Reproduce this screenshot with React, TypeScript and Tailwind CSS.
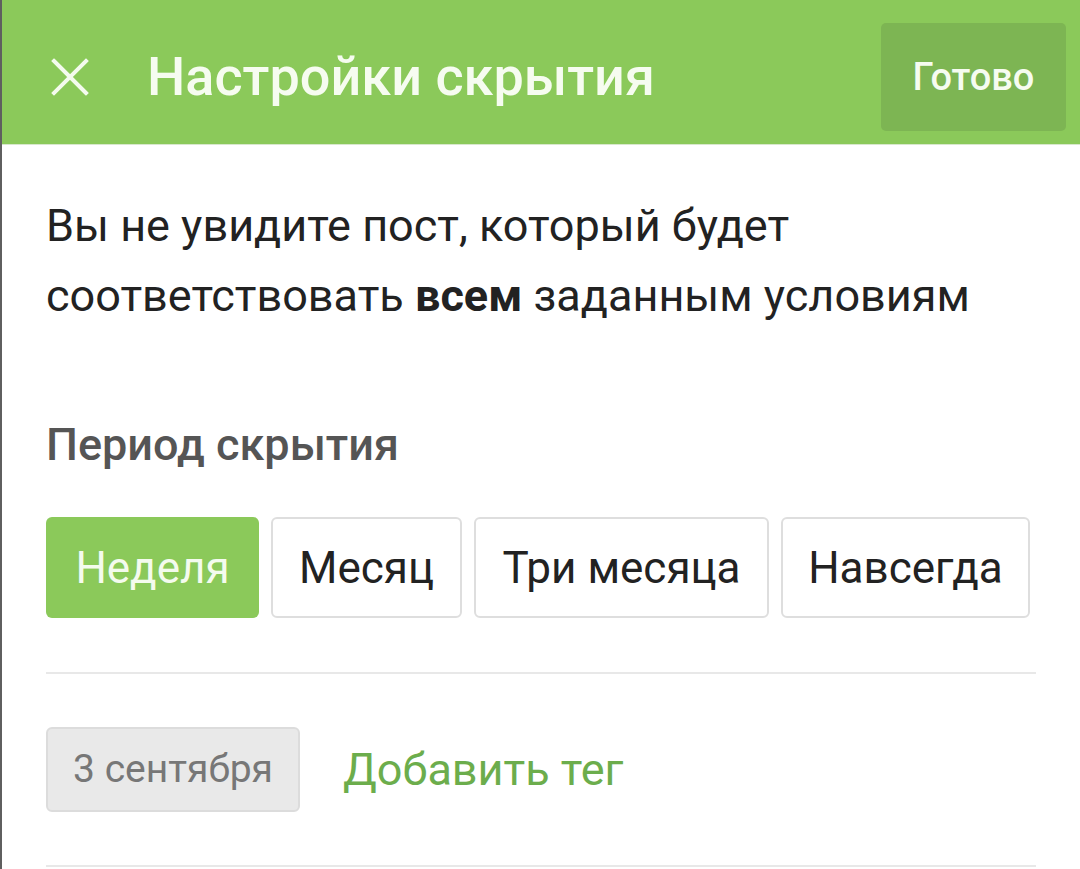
import React from "react";

const periods = [
  { label: "Неделя", width: "w-[213px]", active: true },
  { label: "Месяц", width: "w-[191px]", active: false },
  { label: "Три месяца", width: "w-[295px]", active: false },
  { label: "Навсегда", width: "w-[249px]", active: false },
];

export default function App() {
  return (
    <div
      className="flex h-[869px] w-[1080px] flex-col overflow-hidden border-l-2 border-[#5f5f5f] bg-white"
      style={{ fontFamily: "Roboto, 'Noto Sans', sans-serif" }}
    >
      <header className="flex h-[145px] shrink-0 items-center border-b border-[#d8e8cc] bg-[#8bc95a] pt-[10px] pr-[14px]">
        <button className="ml-[48px] flex h-[40px] w-[40px] items-center justify-center text-[#f4fbee]">
          <svg width="38" height="38" viewBox="0 0 38 38" fill="none">
            <path
              d="M3 3 L35 35 M35 3 L3 35"
              stroke="currentColor"
              strokeWidth="4"
              strokeLinecap="square"
            />
          </svg>
        </button>
        <h1 className="ml-[57px] flex-1 text-[54px] font-medium leading-none text-[#f6fcf0]">
          Настройки скрытия
        </h1>
        <button className="h-[108px] w-[185px] rounded-[5px] bg-[#7db553] text-[38px] font-medium text-[#f6fcf0]">
          Готово
        </button>
      </header>

      <main className="flex flex-col px-[44px] pt-[46px]">
        <p className="text-[45px] leading-[70px] text-[#222]">
          Вы не увидите пост, который будет
          <br />
          соответствовать <b className="font-bold">всем</b> заданным условиям
        </p>

        <h2 className="mt-[86px] text-[45px] font-medium leading-[56px] text-[#555]">
          Период скрытия
        </h2>

        <div className="mt-[44px] flex gap-[12px]">
          {periods.map((p) => (
            <button
              key={p.label}
              className={`${p.width} flex h-[101px] items-center justify-center rounded-[6px] text-[44px] ${
                p.active
                  ? "bg-[#8bc95a] text-[#f4fbee]"
                  : "border-2 border-[#dedede] bg-white text-[#222]"
              }`}
            >
              {p.label}
            </button>
          ))}
        </div>

        <div className="mt-[54px] h-[2px] w-[990px] bg-[#e8e8e8]" />

        <div className="mt-[53px] flex items-center">
          <span className="flex h-[85px] w-[254px] items-center justify-center rounded-[6px] border-2 border-[#dcdcdc] bg-[#e9e9e9] text-[39px] text-[#777]">
            3 сентября
          </span>
          <span className="ml-[43px] text-[45px] text-[#6cad4c]">
            Добавить тег
          </span>
        </div>

        <div className="mt-[53px] h-[2px] w-[990px] bg-[#e8e8e8]" />
      </main>
    </div>
  );
}
